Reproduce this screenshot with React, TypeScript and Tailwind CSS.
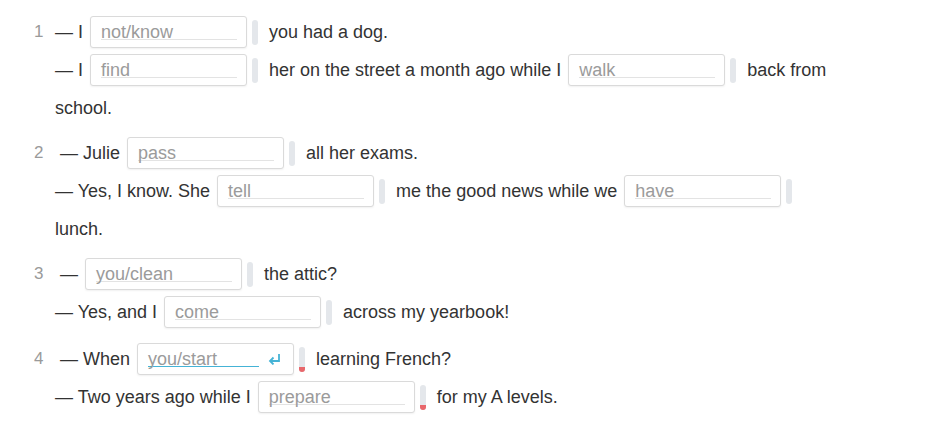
import React from 'react';

type Seg = string | { ph: string; focus?: boolean; err?: boolean };

type Item = { n: number; gap: string; lines: Seg[][] };

const ITEMS: Item[] = [
  {
    n: 1,
    gap: '',
    lines: [
      ['— I', { ph: 'not/know' }, 'you had a dog.'],
      ['— I', { ph: 'find' }, 'her on the street a month ago while I', { ph: 'walk' }, 'back from'],
      ['school.'],
    ],
  },
  {
    n: 2,
    gap: 'mt-[7px]',
    lines: [
      ['— Julie', { ph: 'pass' }, 'all her exams.'],
      ['— Yes, I know. She', { ph: 'tell' }, 'me the good news while we', { ph: 'have' }],
      ['lunch.'],
    ],
  },
  {
    n: 3,
    gap: 'mt-[7px]',
    lines: [
      ['—', { ph: 'you/clean' }, 'the attic?'],
      ['— Yes, and I', { ph: 'come' }, 'across my yearbook!'],
    ],
  },
  {
    n: 4,
    gap: 'mt-[9px]',
    lines: [
      ['— When', { ph: 'you/start', focus: true, err: true }, 'learning French?'],
      ['— Two years ago while I', { ph: 'prepare', err: true }, 'for my A levels.'],
    ],
  },
];

const EnterIcon = () => (
  <svg width="14" height="12" viewBox="0 0 14 12" fill="none" stroke="#45b3d6" strokeWidth="1.8">
    <path d="M12 1v7H3" />
    <path d="M6.5 4.5 3 8l3.5 3.5" />
  </svg>
);

const Gap: React.FC<{ ph: string; focus?: boolean; err?: boolean }> = ({ ph, focus, err }) => (
  <span className="flex items-center ml-[7px] mr-[11px]">
    <span className="flex items-start w-[157px] h-[32px] rounded-[3px] border border-[#dadada] bg-white shadow-[0_1px_2px_rgba(0,0,0,0.06)] pl-[10px] pr-[9px] pt-[7px]">
      <span
        className={`block h-[16px] leading-[16px] text-[#9b9b9b] ${
          focus ? 'w-[111px] border-b border-[#45b3d6]' : 'flex-1 border-b border-[#e3e3e3]'
        }`}
      >
        {ph}
      </span>
      {focus && (
        <span className="ml-auto mt-[2px] mr-[3px]">
          <EnterIcon />
        </span>
      )}
    </span>
    <span className="ml-[5px] w-[6px] h-[25px] rounded-full bg-[#e4e7eb] overflow-hidden flex flex-col justify-end">
      {err && <span className="block h-[5px] bg-[#e8676b]" />}
    </span>
  </span>
);

const App: React.FC = () => {
  return (
    <div
      className="w-[952px] h-[430px] bg-white pt-[13px] pl-[34px] text-[18px] text-[#333333]"
      style={{ fontFamily: '"Liberation Sans", Arial, sans-serif' }}
    >
      {ITEMS.map((item) => (
        <div key={item.n} className={`flex ${item.gap}`}>
          <div className="w-[21px] h-[38px] leading-[38px] text-[#9a9a9a] text-[17px]">{item.n}</div>
          <div>
            {item.lines.map((line, j) => (
              <div key={j} className={`flex items-center h-[38px] whitespace-pre ${j === 0 && item.n > 1 ? 'ml-[5px]' : ''}`}>
                {line.map((s, k) =>
                  typeof s === 'string' ? <span key={k}>{s}</span> : <Gap key={k} {...s} />
                )}
              </div>
            ))}
          </div>
        </div>
      ))}
    </div>
  );
};

export default App;
